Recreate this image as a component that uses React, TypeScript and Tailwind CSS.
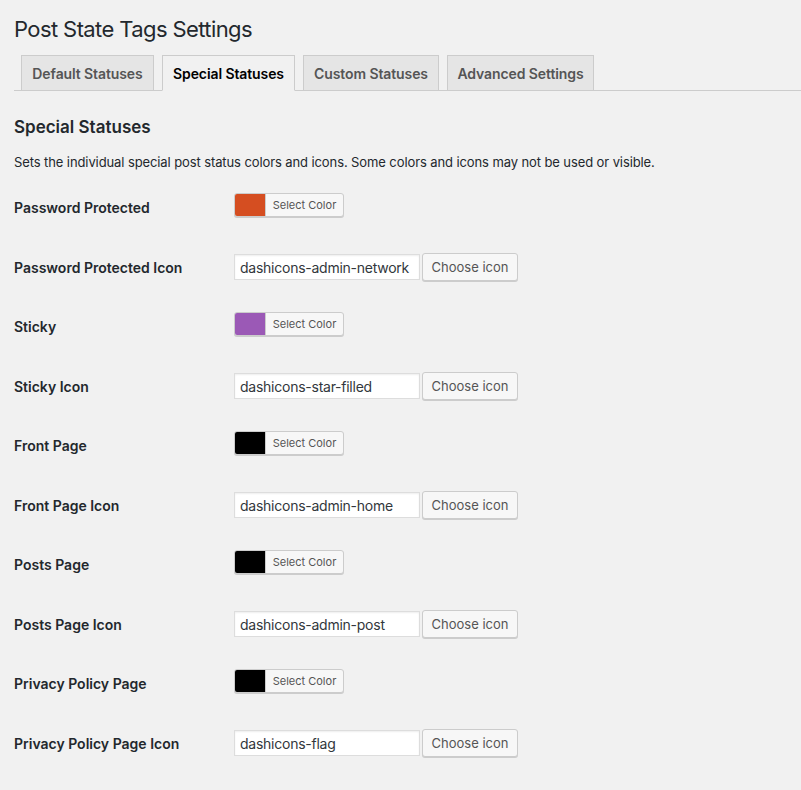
const tabs = [
  { label: 'Default Statuses', active: false, w: 'w-[133px]' },
  { label: 'Special Statuses', active: true, w: 'w-[133px]' },
  { label: 'Custom Statuses', active: false, w: 'w-[136px]' },
  { label: 'Advanced Settings', active: false, w: 'w-[147px]' },
]

type Row =
  | { kind: 'color'; label: string; color: string }
  | { kind: 'icon'; label: string; value: string }

const rows: Row[] = [
  { kind: 'color', label: 'Password Protected', color: '#d54e21' },
  { kind: 'icon', label: 'Password Protected Icon', value: 'dashicons-admin-network' },
  { kind: 'color', label: 'Sticky', color: '#9b59b6' },
  { kind: 'icon', label: 'Sticky Icon', value: 'dashicons-star-filled' },
  { kind: 'color', label: 'Front Page', color: '#000000' },
  { kind: 'icon', label: 'Front Page Icon', value: 'dashicons-admin-home' },
  { kind: 'color', label: 'Posts Page', color: '#000000' },
  { kind: 'icon', label: 'Posts Page Icon', value: 'dashicons-admin-post' },
  { kind: 'color', label: 'Privacy Policy Page', color: '#000000' },
  { kind: 'icon', label: 'Privacy Policy Page Icon', value: 'dashicons-flag' },
]

function ColorButton({ color }: { color: string }) {
  return (
    <div className="flex h-[24px] w-[110px] rounded-[3px] border border-[#cccccc] bg-[#f7f7f7] shadow-[0_1px_0_#cccccc] overflow-hidden">
      <span className="w-[31px] h-full border-r border-[#cccccc]" style={{ backgroundColor: color }} />
      <span className="flex-1 flex items-center justify-center text-[11px] text-[#555555]">Select Color</span>
    </div>
  )
}

function IconField({ value }: { value: string }) {
  return (
    <div className="flex items-center gap-[2px]">
      <div className="w-[186px] h-[26px] bg-white border border-[#dddddd] shadow-[inset_0_1px_2px_rgba(0,0,0,0.07)] flex items-center px-[5px] text-[14px] tracking-[-0.25px] whitespace-nowrap overflow-hidden text-[#32373c]">
        {value}
      </div>
      <div className="w-[96px] h-[28px] rounded-[3px] border border-[#cccccc] bg-[#f7f7f7] shadow-[0_1px_0_#cccccc] flex items-center justify-center text-[13px] text-[#555555]">
        Choose icon
      </div>
    </div>
  )
}

export default function App() {
  return (
    <div className="min-h-[790px] w-[801px] bg-[#f1f1f1] text-[#23282d] font-['Inter','Liberation_Sans',sans-serif] overflow-hidden">
      <div className="pl-[14px]">
        <h1 className="pt-[13px] text-[22px] leading-[32px] font-normal tracking-[-0.6px]">Post State Tags Settings</h1>

        {/* Tabs */}
        <div className="mt-[10px] flex items-end gap-[8px] pl-[7px] border-b border-[#cccccc] h-[36px]">
          {tabs.map((t) => (
            <div
              key={t.label}
              className={`${t.w} h-[36px] flex items-center justify-center border border-[#cccccc] text-[14px] font-semibold tracking-[-0.1px] -mb-px ${
                t.active ? 'bg-[#f1f1f1] border-b-[#f1f1f1] text-black' : 'bg-[#e5e5e5] text-[#555555]'
              }`}
            >
              {t.label}
            </div>
          ))}
        </div>

        <h2 className="mt-[25px] text-[17px] leading-[22px] font-semibold">Special Statuses</h2>
        <p className="mt-[15px] text-[13px] leading-[18px] tracking-[-0.1px]">
          Sets the individual special post status colors and icons. Some colors and icons may not be used or visible.
        </p>

        {/* Form rows */}
        <div className="mt-[7px]">
          {rows.map((r) => (
            <div key={r.label} className="h-[59.5px] flex items-center">
              <div className="w-[220px] text-[14px] font-semibold">{r.label}</div>
              {r.kind === 'color' ? (
                <div className="-mt-[5px]">
                  <ColorButton color={r.color} />
                </div>
              ) : (
                <IconField value={r.value} />
              )}
            </div>
          ))}
        </div>
      </div>
    </div>
  )
}
